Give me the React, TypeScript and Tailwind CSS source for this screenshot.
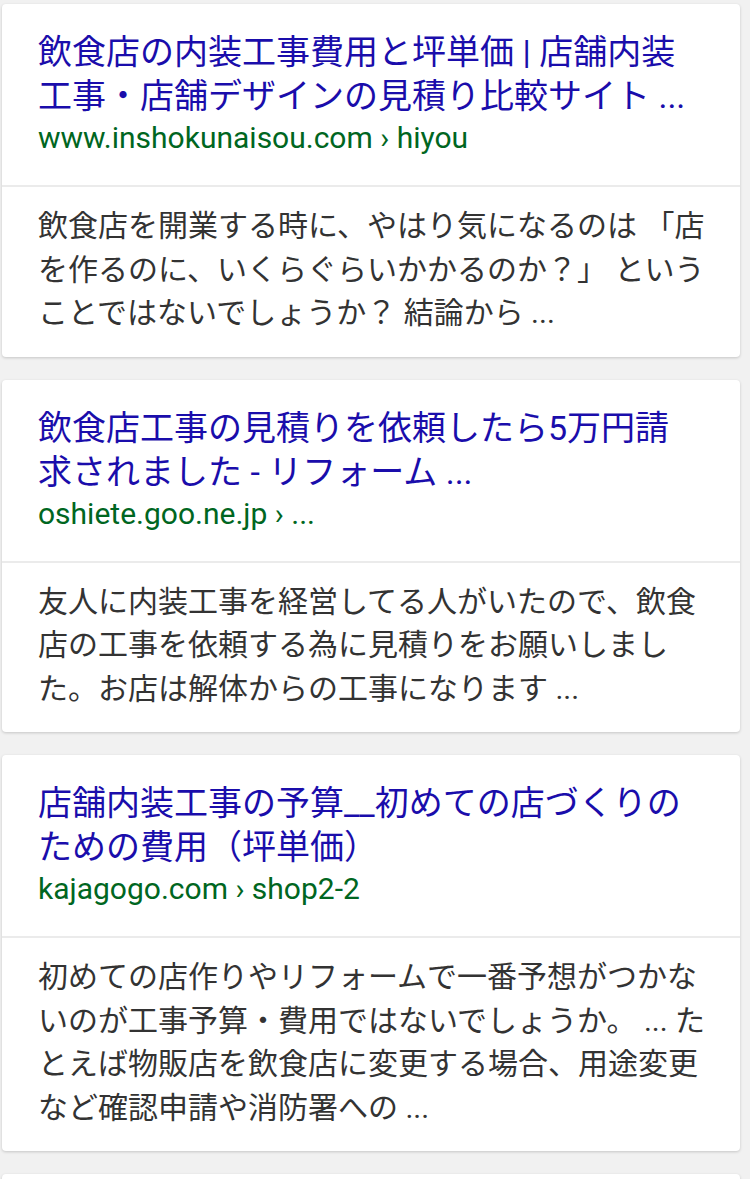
import React from 'react';

interface Result {
  title: string[];
  url: string;
  snippet: string[];
}

const results: Result[] = [
  {
    title: ['飲食店の内装工事費用と坪単価 | 店舗内装', '工事・店舗デザインの見積り比較サイト ...'],
    url: 'www.inshokunaisou.com › hiyou',
    snippet: [
      '飲食店を開業する時に、やはり気になるのは 「店',
      'を作るのに、いくらぐらいかかるのか？」 という',
      'ことではないでしょうか？ 結論から ...',
    ],
  },
  {
    title: ['飲食店工事の見積りを依頼したら5万円請', '求されました - リフォーム ...'],
    url: 'oshiete.goo.ne.jp › ...',
    snippet: [
      '友人に内装工事を経営してる人がいたので、飲食',
      '店の工事を依頼する為に見積りをお願いしまし',
      'た。お店は解体からの工事になります ...',
    ],
  },
  {
    title: ['店舗内装工事の予算__初めての店づくりの', 'ための費用（坪単価）'],
    url: 'kajagogo.com › shop2-2',
    snippet: [
      '初めての店作りやリフォームで一番予想がつかな',
      'いのが工事予算・費用ではないでしょうか。 ... た',
      'とえば物販店を飲食店に変更する場合、用途変更',
      'など確認申請や消防署への ...',
    ],
  },
];

const ResultCard: React.FC<{ result: Result }> = ({ result }) => (
  <div className="ml-[2px] w-[738px] bg-white rounded-[4px] shadow-[0_1px_3px_rgba(0,0,0,0.18)]">
    <div className="px-[36px] pt-[26px] pb-[27px]">
      <div className="text-[34px] leading-[44px] text-[#1a0dab] whitespace-nowrap">
        {result.title.map((line) => (
          <div key={line}>{line}</div>
        ))}
      </div>
      <div className="text-[30px] leading-[40px] text-[#006621] whitespace-nowrap">{result.url}</div>
    </div>
    <div className="h-[2px] bg-[#ebebeb]" />
    <div className="px-[36px] pt-[17px] pb-[22px] text-[30px] leading-[43.5px] text-[#333333] whitespace-nowrap">
      {result.snippet.map((line) => (
        <div key={line}>{line}</div>
      ))}
    </div>
  </div>
);

export default function App() {
  return (
    <div
      className="h-[1179px] bg-[#f1f1f1] pt-[4px] flex flex-col gap-[23px] overflow-hidden"
      style={{ fontFamily: 'Roboto, "Noto Sans CJK JP", sans-serif' }}
    >
      {results.map((r) => (
        <ResultCard key={r.url} result={r} />
      ))}
      <div className="ml-[2px] w-[738px] h-[60px] shrink-0 bg-white rounded-[4px] shadow-[0_1px_3px_rgba(0,0,0,0.18)]" />
    </div>
  );
}
